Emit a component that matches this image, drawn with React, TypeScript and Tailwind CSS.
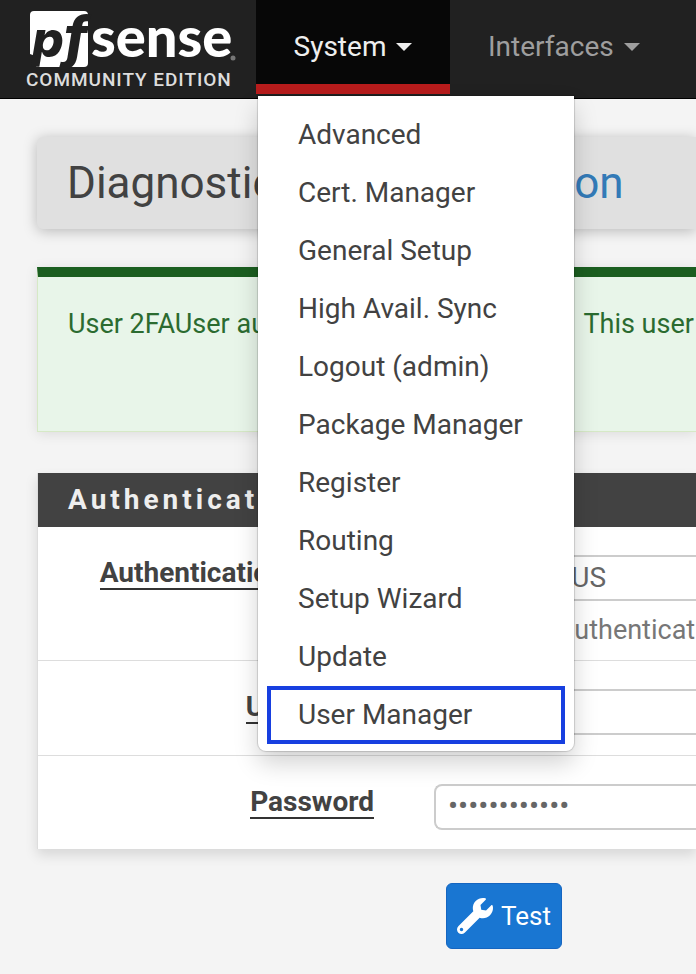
import React, { useState } from 'react';
import { FaWrench } from 'react-icons/fa';

const systemMenu = [
    'Advanced',
    'Cert. Manager',
    'General Setup',
    'High Avail. Sync',
    'Logout (admin)',
    'Package Manager',
    'Register',
    'Routing',
    'Setup Wizard',
    'Update',
    'User Manager',
];

const Caret: React.FC = () => (
    <span className="ml-2.5 inline-block border-x-8 border-t-8 border-x-transparent border-t-current" />
);

const Logo: React.FC = () => (
    <a href="#" aria-label="pfSense Community Edition" className="block w-64 shrink-0">
        <svg viewBox="0 0 256 98" className="block h-[98px] w-64">
            <path d="M34 11H84Q88 11 88 15V63Q88 67 84 67H36L38 57L30 54V15Q30 11 34 11Z" fill="#fff" />
            <text x="32" y="57" fill="#212121" fontSize="50" className="font-[Inter] font-extrabold italic">
                p
                <tspan fontSize="56">f</tspan>
            </text>
            <text x="91" y="57" fill="#fff" fontSize="56" className="font-[Lato] font-black">
                sense
            </text>
            <circle cx="233" cy="58" r="2.5" fill="#777" />
            <text x="26" y="86" fill="#ddd" fontSize="19" className="font-medium tracking-wider">
                COMMUNITY EDITION
            </text>
        </svg>
    </a>
);

const SystemMenu: React.FC = () => (
    <ul className="absolute top-full left-0.5 z-10 mt-3 w-[316px] rounded-b-lg bg-white pt-2.5 pb-[7px] shadow-[0_12px_24px_rgba(0,0,0,0.18),0_0_1px_1px_rgba(0,0,0,0.15)]">
        {systemMenu.map((item) => (
            <li key={item}>
                <a
                    href="#"
                    className={`mx-[9px] flex h-[58px] items-center text-[#424242] ${
                        item === 'User Manager' ? 'border-4 border-[#173fe0] px-[27px]' : 'px-[31px]'
                    }`}
                >
                    {item}
                </a>
            </li>
        ))}
    </ul>
);

interface FormRowProps {
    id: string;
    label: string;
    children: React.ReactNode;
}

const FormRow: React.FC<FormRowProps> = ({ id, label, children }) => (
    <div className="flex border-b border-[#ddd] pt-7 pb-5 last:border-b-0 last:pb-[19px]">
        <div className="flex w-[336px] shrink-0 justify-end">
            <label
                htmlFor={id}
                className="h-[35px] border-b-2 border-[#333] leading-9 font-bold whitespace-nowrap text-[#424242]"
            >
                {label}
            </label>
        </div>
        <div className="ml-[60px] min-w-0 flex-1">{children}</div>
    </div>
);

const inputClass =
    'block h-[46px] w-full appearance-none rounded-l-lg border-2 border-r-0 border-[#ccc] bg-white text-[#666] outline-none';

export default function App() {
    const [username, setUsername] = useState('');
    const [password, setPassword] = useState('abcdefghijkl');

    return (
        <div className="min-h-screen overflow-hidden bg-[#f4f4f4] font-[Roboto,sans-serif] text-[28px] text-[#424242]">
            <header className="flex h-[99px] border-b border-black bg-[#212121]">
                <Logo />
                <nav className="flex">
                    <div className="relative h-[94px] w-[194px] border-b-[10px] border-[#b71c1c] bg-[#070707]">
                        <button type="button" className="flex h-[94px] w-full items-center justify-center text-[#eee]">
                            System
                            <Caret />
                        </button>
                        <SystemMenu />
                    </div>
                    <button type="button" className="flex h-[94px] items-center px-[38px] text-[#9e9e9e]">
                        Interfaces
                        <Caret />
                    </button>
                </nav>
            </header>

            <main className="pt-[38px] pl-[37px]">
                <h1 className="flex h-[92px] items-center rounded-l-md bg-[#e0e0e0] pl-[30px] text-[44px] whitespace-nowrap shadow-[0_2px_14px_rgba(0,0,0,0.25)]">
                    <span>
                        Diagnostics /{' '}
                        <a href="#" className="text-[#337ab7]">
                            Authentication
                        </a>
                    </span>
                </h1>

                <div className="mt-[38px] h-[165px] border-t-[10px] border-b border-l border-t-[#1b5e20] border-b-[#d6e9c6] border-l-[#d6e9c6] bg-[#e8f5e9] pt-[30px] pl-[30px] text-[27px] leading-[34px] whitespace-nowrap text-[#2b6b30] shadow-[0_2px_12px_rgba(0,0,0,0.1)]">
                    User 2FAUser authenticated successfully.
                    <span className="ml-5">This user</span>
                </div>

                <form onSubmit={(e) => e.preventDefault()}>
                    <section className="mt-[41px] border-l border-[#ddd] bg-white shadow-[0_6px_12px_rgba(0,0,0,0.12)]">
                        <h2 className="h-[54px] bg-[#424242] pl-[30px] leading-[54px] font-bold tracking-[4px] text-[#eee]">
                            Authentication Test
                        </h2>
                        <FormRow id="server" label="Authentication Server">
                            <select id="server" className={`${inputClass} px-3.5`}>
                                <option>2FA_RADIUS</option>
                            </select>
                            <p className="mt-[13px] h-[26px] text-[27px] leading-8 whitespace-nowrap text-[#777]">
                                Select the authentication server to test against.
                            </p>
                        </FormRow>
                        <FormRow id="username" label="Username">
                            <input
                                id="username"
                                type="text"
                                value={username}
                                onChange={(e) => setUsername(e.target.value)}
                                className={`${inputClass} px-3`}
                            />
                        </FormRow>
                        <FormRow id="password" label="Password">
                            <input
                                id="password"
                                type="password"
                                value={password}
                                onChange={(e) => setPassword(e.target.value)}
                                className={`${inputClass} px-3 pb-1 text-[30px]`}
                            />
                        </FormRow>
                    </section>

                    <button
                        type="submit"
                        className="mt-[34px] ml-[409px] flex h-[66px] w-[116px] items-center justify-center gap-2 rounded-md border border-[#1565c0] bg-[#1976d2] text-[26px] text-white"
                    >
                        <FaWrench className="size-9" />
                        Test
                    </button>
                </form>
            </main>
        </div>
    );
}
